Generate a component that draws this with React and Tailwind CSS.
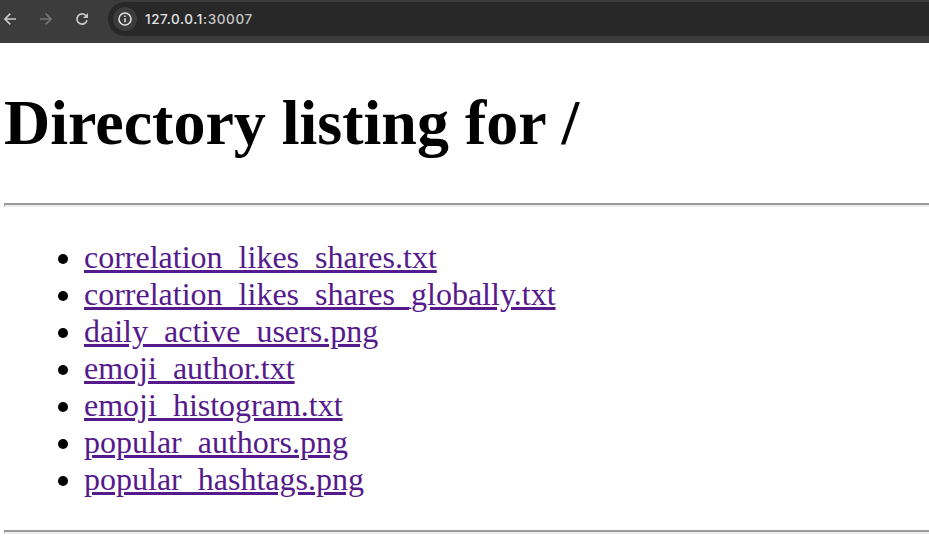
const files = [
  "correlation_likes_shares.txt",
  "correlation_likes_shares_globally.txt",
  "daily_active_users.png",
  "emoji_author.txt",
  "emoji_histogram.txt",
  "popular_authors.png",
  "popular_hashtags.png",
];

function Rule() {
  return (
    <div className="ml-1 h-1 border-l border-t-2 border-b-2 border-t-[#9a9a9a] border-l-[#9a9a9a] border-b-[#eeeeee]" />
  );
}

export default function App() {
  return (
    <div className="h-[556px] w-[929px] overflow-hidden bg-white">
      <header className="flex h-[43px] items-start bg-[#3c3c3c]">
        <div className="flex h-[38px] w-[108px] items-center">
          <svg className="ml-[3px] size-[14px]" viewBox="0 0 14 14" fill="none" stroke="#c7c7c7" strokeWidth="1.7">
            <path d="M13 7H2.2M7.3 1.7L2 7l5.3 5.3" />
          </svg>
          <svg className="ml-[22px] size-[14px]" viewBox="0 0 14 14" fill="none" stroke="#757575" strokeWidth="1.7">
            <path d="M1 7h10.8M6.7 1.7L12 7l-5.3 5.3" />
          </svg>
          <svg className="ml-[22px] size-[14px]" viewBox="0 0 14 14" fill="none" stroke="#c7c7c7" strokeWidth="1.7">
            <path d="M12 8.3A5.1 5.1 0 1 1 10.8 3.5L12 4.7" />
            <path d="M13 1v5H8z" fill="#c7c7c7" stroke="none" />
          </svg>
        </div>
        <div className="mt-[2px] flex h-[34px] flex-1 items-center rounded-l-full bg-[#282828] pl-[5px]">
          <span className="flex size-6 items-center justify-center rounded-full bg-[#3c3c3c]">
            <svg className="size-[14px]" viewBox="0 0 14 14" fill="none" stroke="#e3e3e3" strokeWidth="1.5">
              <circle cx="7" cy="7" r="6" />
              <path d="M7 6.2v4M7 3.6v1.5" />
            </svg>
          </span>
          <span className="ml-2 font-[Inter,sans-serif] text-[13.5px] font-medium tracking-[0.6px] text-[#e3e3e3]">
            127.0.0.1<span className="text-[#c7c7c7]">:30007</span>
          </span>
        </div>
      </header>
      <main className="font-['Liberation_Serif',serif] text-black">
        <h1 className="mt-[43px] ml-1 h-[117px] text-[64px] leading-[73px] font-bold">Directory listing for /</h1>
        <Rule />
        <ul className="mt-[32px] mb-[32px] list-disc pl-[84px] text-[32px] leading-[37px]">
          {files.map((name) => (
            <li key={name}>
              <a href="#" className="text-[#551a8b] underline">{name}</a>
            </li>
          ))}
        </ul>
        <Rule />
      </main>
    </div>
  );
}
